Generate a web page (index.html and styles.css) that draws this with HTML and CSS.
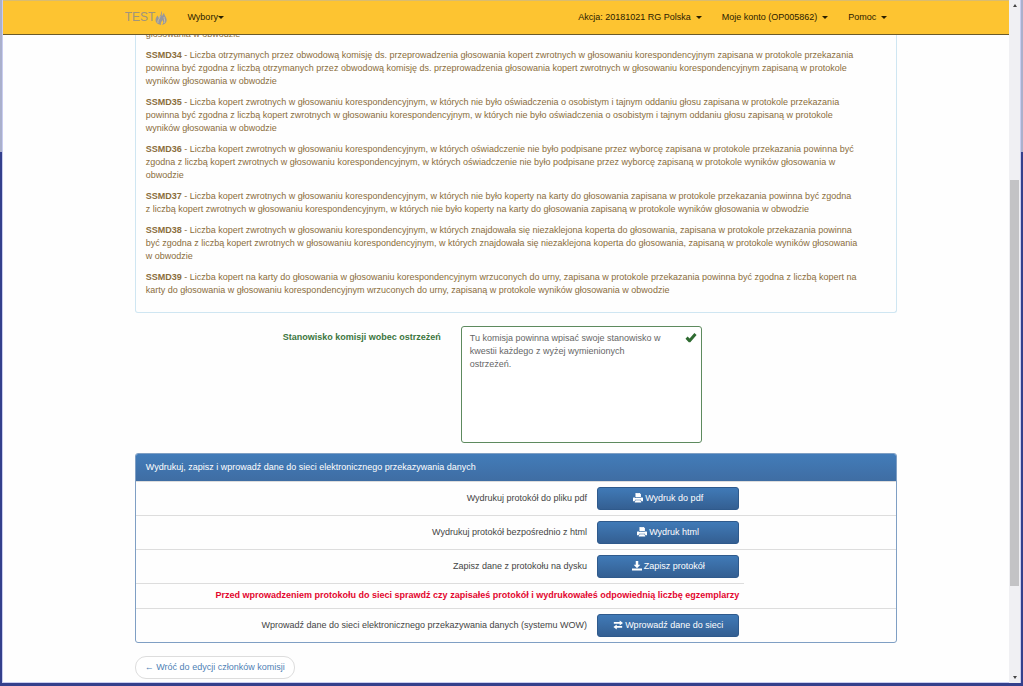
FILE: index.html
```html
<!DOCTYPE html>
<html lang="pl">
<head>
<meta charset="utf-8">
<title>Protokół głosowania</title>
<link rel="stylesheet" href="styles.css">
</head>
<body>
<svg class="sprite" aria-hidden="true">
  <symbol id="i-print" viewBox="0 0 12 12"><path fill="currentColor" fill-rule="evenodd" d="M3 0h5l1.500 1.500V5H3zM4 1v4h4.500V2H7.500V1zM1 5h1v1h8V5h1l1 1v4h-2L9.500 8h-7L2 10H0V6zM3 8.800h6l1 2.700H2z"/><path fill="currentColor" d="M3.500.5h4.300L9 1.700V5H3.500z"/></symbol>
  <symbol id="i-save" viewBox="0 0 12 12"><path fill="currentColor" d="M4.500 0h3v4.500H10L6 8.800 2 4.500h2.500zM0 9h12v2.500H0z"/></symbol>
  <symbol id="i-transfer" viewBox="0 0 12 12"><path fill="currentColor" d="M1 2.500h7V.5l4 3-4 3v-2H1zM11 7.300H4.500v-2L.5 8.300l4 3v-2H11z"/></symbol>
  <symbol id="i-ok" viewBox="0 0 12 12"><path fill="currentColor" d="M.5 6.800 2.600 4.600l2 1.900L9.400 1.100l2.200 2L5.300 10.200H3.800z"/></symbol>
  <symbol id="i-flame" viewBox="0 0 12 14"><path fill="#98989a" d="M6.500 0C8 2 6 3.500 7 5 8 4 7.500 3 9 2c0 2 2.700 4 2.700 7 0 2.500-2 4.500-4.700 5 1.500-1.500 1.500-3.500.5-5C7 10.500 5.500 11 6 14 2.500 13.500.5 11.500.5 9c0-2 1.200-3 2-4.500.7.700.8 1.500.8 2.500C5 5 6.500 3 6.500 0z"/><path fill="none" stroke="#d8c79c" stroke-width=".8" d="M3 12C2 9 5 8 5 5M9 12c1.500-2 0-4 0-6"/></symbol>
</svg>
<div class="window">
  <div class="page">
    <header class="navbar">
      <nav class="nav-inner">
        <a class="brand" href="#">TEST<svg class="flame"><use href="#i-flame"/></svg></a>
        <a class="nav-link tight" href="#">Wybory<span class="caret"></span></a>
        <span class="spacer"></span>
        <a class="nav-link" href="#">Akcja: 20181021 RG Polska<span class="caret"></span></a>
        <a class="nav-link" href="#">Moje konto (OP005862)<span class="caret"></span></a>
        <a class="nav-link" href="#">Pomoc<span class="caret"></span></a>
      </nav>
    </header>
    <main class="content">
      <section class="warnings">
        <p>głosowania w obwodzie</p>
        <p><b>SSMD34</b> - Liczba otrzymanych przez obwodową komisję ds. przeprowadzenia głosowania kopert zwrotnych w głosowaniu korespondencyjnym zapisana w protokole przekazania<br>powinna być zgodna z liczbą otrzymanych przez obwodową komisję ds. przeprowadzenia głosowania kopert zwrotnych w głosowaniu korespondencyjnym zapisaną w protokole<br>wyników głosowania w obwodzie</p>
        <p><b>SSMD35</b> - Liczba kopert zwrotnych w głosowaniu korespondencyjnym, w których nie było oświadczenia o osobistym i tajnym oddaniu głosu zapisana w protokole przekazania<br>powinna być zgodna z liczbą kopert zwrotnych w głosowaniu korespondencyjnym, w których nie było oświadczenia o osobistym i tajnym oddaniu głosu zapisaną w protokole<br>wyników głosowania w obwodzie</p>
        <p><b>SSMD36</b> - Liczba kopert zwrotnych w głosowaniu korespondencyjnym, w których oświadczenie nie było podpisane przez wyborcę zapisana w protokole przekazania powinna być<br>zgodna z liczbą kopert zwrotnych w głosowaniu korespondencyjnym, w których oświadczenie nie było podpisane przez wyborcę zapisaną w protokole wyników głosowania w<br>obwodzie</p>
        <p><b>SSMD37</b> - Liczba kopert zwrotnych w głosowaniu korespondencyjnym, w których nie było koperty na karty do głosowania zapisana w protokole przekazania powinna być zgodna<br>z liczbą kopert zwrotnych w głosowaniu korespondencyjnym, w których nie było koperty na karty do głosowania zapisaną w protokole wyników głosowania w obwodzie</p>
        <p><b>SSMD38</b> - Liczba kopert zwrotnych w głosowaniu korespondencyjnym, w których znajdowała się niezaklejona koperta do głosowania, zapisana w protokole przekazania powinna<br>być zgodna z liczbą kopert zwrotnych w głosowaniu korespondencyjnym, w których znajdowała się niezaklejona koperta do głosowania, zapisaną w protokole wyników głosowania<br>w obwodzie</p>
        <p><b>SSMD39</b> - Liczba kopert na karty do głosowania w głosowaniu korespondencyjnym wrzuconych do urny, zapisana w protokole przekazania powinna być zgodna z liczbą kopert na<br>karty do głosowania w głosowaniu korespondencyjnym wrzuconych do urny, zapisaną w protokole wyników głosowania w obwodzie</p>
      </section>
      <form class="form-row">
        <label class="form-label" for="stanowisko">Stanowisko komisji wobec ostrzeżeń</label>
        <div class="field">
          <textarea id="stanowisko">Tu komisja powinna wpisać swoje stanowisko w kwestii każdego z wyżej wymienionych ostrzeżeń.</textarea>
          <svg class="ok"><use href="#i-ok"/></svg>
        </div>
      </form>
      <section class="panel">
        <h2 class="panel-heading">Wydrukuj, zapisz i wprowadź dane do sieci elektronicznego przekazywania danych</h2>
        <table class="actions">
          <colgroup><col class="c-label"><col class="c-button"><col class="c-rest"></colgroup>
          <tbody>
          <tr><td>Wydrukuj protokół do pliku pdf</td><td><button class="btn" type="button"><svg class="icon"><use href="#i-print"/></svg>Wydruk do pdf</button></td><td></td></tr>
          <tr><td>Wydrukuj protokół bezpośrednio z html</td><td><button class="btn" type="button"><svg class="icon"><use href="#i-print"/></svg>Wydruk html</button></td><td></td></tr>
          <tr><td>Zapisz dane z protokołu na dysku</td><td><button class="btn" type="button"><svg class="icon"><use href="#i-save"/></svg>Zapisz protokół</button></td><td></td></tr>
          <tr><td class="alert" colspan="2">Przed wprowadzeniem protokołu do sieci sprawdź czy zapisałeś protokół i wydrukowałeś odpowiednią liczbę egzemplarzy</td></tr>
          <tr><td>Wprowadź dane do sieci elektronicznego przekazywania danych (systemu WOW)</td><td><button class="btn" type="button"><svg class="icon"><use href="#i-transfer"/></svg>Wprowadź dane do sieci</button></td><td></td></tr>
          </tbody>
        </table>
      </section>
      <a class="back" href="#">← Wróć do edycji członków komisji</a>
    </main>
  </div>
  <div class="scrollbar">
    <span class="arrow up"></span>
    <span class="track-before"></span>
    <span class="thumb"></span>
    <span class="track-after"></span>
    <span class="arrow down"></span>
  </div>
</div>
</body>
</html>
```
FILE: styles.css
```css
* { box-sizing: border-box; }
body {
  margin: 0;
  font: 9px/13px "Liberation Sans", Arial, sans-serif;
  color: #444;
  background: linear-gradient(#aab0cc 152px, #34408c 152px);
}
.sprite { position: absolute; width: 0; height: 0; }
.window {
  display: flex;
  height: 100vh;
  padding: 0 2px 3px;
  overflow: hidden;
}
.page {
  position: relative;
  flex: 1;
  overflow: hidden;
  background: #fefefe;
  border: solid #c9cdf0;
  border-width: 0 0 1px 1px;
}
.navbar {
  position: absolute;
  inset: 0 0 auto;
  z-index: 1;
  height: 35px;
  background: #fdc431;
  border-top: 1px solid #d9bc70;
  border-bottom: 1px solid #6b5a2a;
  padding: 0 11.1% 0 13.1%;
}
.nav-inner {
  display: flex;
  align-items: center;
  height: 100%;
  margin-left: -10px;
}
.brand {
  display: flex;
  align-items: center;
  font-size: 12px;
  color: #a0957c;
  text-decoration: none;
  margin-right: 10px;
}
.flame { width: 12px; height: 14px; }
.nav-link {
  display: flex;
  align-items: center;
  gap: 5px;
  padding: 0 10px;
  color: #2a2000;
  text-decoration: none;
}
.tight { gap: 0; }
.spacer { flex: 1; }
.caret {
  border: 3px solid transparent;
  border-top-color: currentColor;
  border-bottom: 0;
}
.content { padding: 28px 11.1% 0 13.1%; }
.warnings {
  padding: 0 10px 7px;
  border: solid #cfe6f2;
  border-width: 0 1px 1px;
  border-radius: 0 0 3px 3px;
  color: #8a6d3b;
  white-space: nowrap;
}
.warnings p { margin: 0 0 8px; }
.form-row {
  display: grid;
  grid-template-columns: 5fr 4fr 3fr;
  margin: 13px -10px 10px;
}
.form-label {
  padding: 5px 10px;
  text-align: right;
  font-weight: bold;
  color: #3c763d;
}
.field { position: relative; padding: 0 10px; }
.field textarea {
  display: block;
  width: 100%;
  height: 117px;
  padding: 5px 36px 5px 8px;
  font: inherit;
  color: #666;
  background: #fff;
  border: 1px solid #5d8a5e;
  border-radius: 3px;
  resize: none;
  overflow: hidden;
}
.ok {
  position: absolute;
  top: 6px;
  right: 15px;
  width: 12px;
  height: 12px;
  color: #2f6b31;
}
.panel {
  border: 1px solid #7f9fc4;
  border-radius: 3px;
  overflow: hidden;
}
.panel-heading {
  margin: 0;
  padding: 7px 10px;
  font-size: 9px;
  font-weight: normal;
  color: #fff;
  background: linear-gradient(#427cb9, #3f6da3);
}
.actions {
  width: 100%;
  table-layout: fixed;
  border-collapse: collapse;
}
.c-label { width: 60%; }
.c-button, .c-rest { width: 20%; }
.actions td {
  padding: 5px;
  border-top: 1px solid #ddd;
  text-align: right;
}
.actions .alert {
  padding-bottom: 6px;
  font-weight: bold;
  color: #e3062e;
}
.btn {
  display: flex;
  align-items: center;
  justify-content: center;
  gap: 2px;
  width: 100%;
  height: 23px;
  padding: 0 0 1px;
  font: inherit;
  color: #fff;
  background: linear-gradient(#407ab7, #345f92);
  border: 1px solid #2f5a8c;
  border-radius: 3px;
}
.icon { width: 10px; height: 10px; }
.back {
  display: inline-block;
  margin-top: 13px;
  padding: 4px 9px;
  color: #4f7fb5;
  text-decoration: none;
  background: #fff;
  border: 1px solid #ddd;
  border-radius: 11px;
}
.scrollbar {
  display: flex;
  flex-direction: column;
  align-items: center;
  width: 12px;
  padding: 4px 1px;
  background: #f0f0f3;
  border-right: 1px solid #c9cdf0;
}
.arrow { border: 2px solid transparent; }
.up { border-bottom: 3px solid #444; border-top: 0; }
.down { border-top: 3px solid #444; border-bottom: 0; }
.track-before { flex: 173; }
.thumb { flex: 405; width: 100%; background: #c3c3c5; }
.track-after { flex: 90; }
```
